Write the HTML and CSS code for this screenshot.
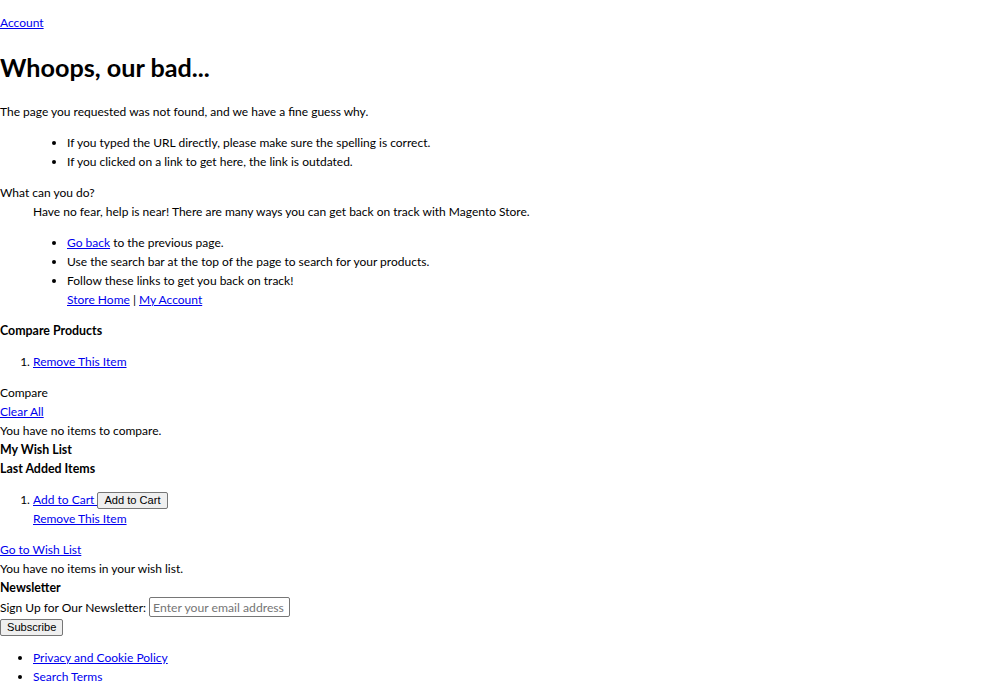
FILE: index.html
```html
<!DOCTYPE html>
<html lang="en">
<head>
  <meta charset="UTF-8" />
  <meta name="viewport" content="width=device-width, initial-scale=1.0"/>
  <title>404 Not Found</title>
  <link rel="stylesheet" href="styles.css">
</head>
<body>
  <div class="header-links">
    <a href="#">Account</a>
  </div>

  <h1 class="page-title">Whoops, our bad...</h1>

  <dl>
    <dt>The page you requested was not found, and we have a fine guess why.</dt>
    <dd>
      <ul class="disc">
        <li>If you typed the URL directly, please make sure the spelling is correct.</li>
        <li>If you clicked on a link to get here, the link is outdated.</li>
      </ul>
    </dd>
  </dl>

  <dl>
    <dt>What can you do?</dt>
    <dd>Have no fear, help is near! There are many ways you can get back on track with Magento Store.</dd>
    <dd>
      <ul class="disc">
        <li><a href="#">Go back</a> to the previous page.</li>
        <li>Use the search bar at the top of the page to search for your products.</li>
        <li>Follow these links to get you back on track!<br>
          <a href="#">Store Home</a> <span class="separator">|</span> <a href="#">My Account</a></li>
      </ul>
    </dd>
  </dl>

  <div class="block-compare">
    <div class="block-title"><strong>Compare Products</strong></div>
    <ol class="product-items">
      <li><a href="#">Remove This Item</a></li>
    </ol>
    <div class="actions">
      <div>Compare</div>
      <div><a href="#">Clear All</a></div>
    </div>
    <div class="empty">You have no items to compare.</div>
  </div>

  <div class="block-wishlist">
    <div class="block-title"><strong>My Wish List</strong></div>
    <div class="subtitle"><strong>Last Added Items</strong></div>
    <ol class="product-items">
      <li><a href="#">Add to Cart </a><button type="button" class="btn">Add to Cart</button><br>
        <a href="#">Remove This Item</a></li>
    </ol>
    <div class="actions"><a href="#">Go to Wish List</a></div>
    <div class="empty">You have no items in your wish list.</div>
  </div>

  <div class="block-newsletter">
    <div class="block-title"><strong>Newsletter</strong></div>
    <form class="subscribe">
      <label for="newsletter">Sign Up for Our Newsletter:</label>
      <input type="email" id="newsletter" class="email" placeholder="Enter your email address" />
      <div><button type="button" class="btn">Subscribe</button></div>
    </form>
  </div>

  <ul class="footer-links">
    <li><a href="#">Privacy and Cookie Policy</a></li>
    <li><a href="#">Search Terms</a></li>
  </ul>
</body>
</html>
```

FILE: styles.css
```css
body {
  margin: 0;
  font-family: Lato, "Open Sans", sans-serif;
  font-size: 12px;
  line-height: 19px;
  color: #000;
  background: #fff;
}

a {
  color: #0000ee;
}

strong {
  font-size: 12.4px;
  line-height: 14px;
}

.header-links {
  margin: 13px 0;
}

h1 {
  font-size: 25.2px;
  line-height: 34px;
  margin: 18px 0;
}

dl {
  margin: 12px 0;
}

dd {
  margin-left: 33px;
}

ul, ol {
  margin: 12px 0;
  padding-left: 33px;
}

dd ul {
  padding-left: 34px;
}

.disc {
  list-style: disc;
}

.btn {
  font-family: "Liberation Sans", Arial, sans-serif;
  font-size: 11.1px;
  line-height: 13px;
  padding: 1px 6px;
  margin: 0;
  color: #000;
  background: #efefef;
  border: 1px solid #767676;
  border-radius: 2px;
  vertical-align: baseline;
}

.email {
  box-sizing: border-box;
  width: 141px;
  height: 20px;
  margin: 0;
  padding: 1px 3px;
  font-family: Lato, "Open Sans", sans-serif;
  font-size: 12.2px;
  border: 1px solid #767676;
  border-radius: 2px;
}

.email::placeholder {
  color: #757575;
}

.footer-links {
  margin-top: 12px;
}
```
